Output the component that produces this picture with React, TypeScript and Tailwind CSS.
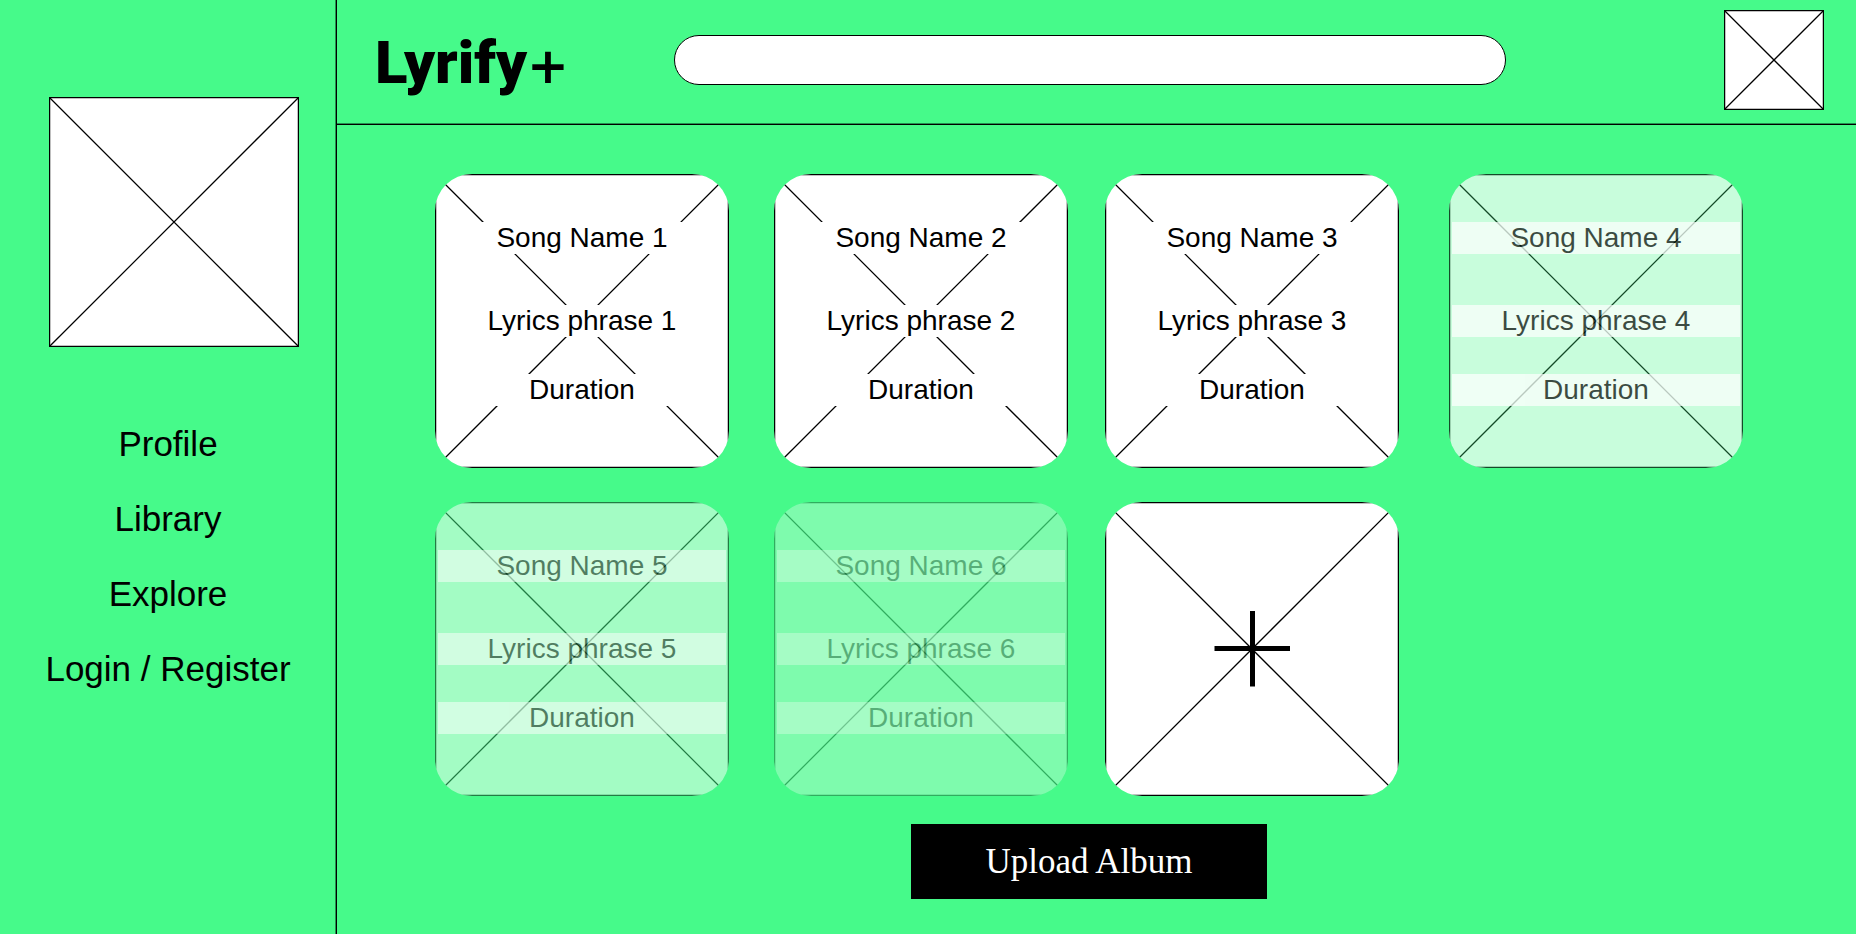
import React from 'react';

function CrossLines() {
  return (
    <svg className="absolute inset-0 h-full w-full" viewBox="0 0 100 100" preserveAspectRatio="none" aria-hidden="true">
      <path d="M0 0L100 100M100 0L0 100" fill="none" stroke="#000" strokeWidth="1.25" vectorEffect="non-scaling-stroke" />
    </svg>
  );
}

function Placeholder({ className }: { className: string }) {
  return (
    <div className={`relative border border-black bg-white shadow-[inset_0_0_0_1px_#bfbfbf] ${className}`}>
      <CrossLines />
    </div>
  );
}

type Song = { id: number; opacity: string };

const songs: Song[] = [
  { id: 1, opacity: 'opacity-100' },
  { id: 2, opacity: 'opacity-100' },
  { id: 3, opacity: 'opacity-100' },
  { id: 4, opacity: 'opacity-70' },
  { id: 5, opacity: 'opacity-50' },
  { id: 6, opacity: 'opacity-30' },
];

function SongCard({ song }: { song: Song }) {
  const strip = `bg-white text-center text-[28px] leading-8 ${song.opacity}`;
  return (
    <article className="relative h-[294px] w-[294px]">
      <div className={`absolute inset-0 overflow-hidden rounded-[37px] ${song.opacity}`}>
        <Placeholder className="h-full w-full" />
      </div>
      <div className="relative flex flex-col px-[3px] pt-12">
        <h2 className={strip}>Song Name {song.id}</h2>
        <p className={`mt-[51px] ${strip}`}>Lyrics phrase {song.id}</p>
        <p className={`mt-[37px] ${strip}`}>Duration</p>
      </div>
    </article>
  );
}

function AddCard() {
  return (
    <button
      type="button"
      aria-label="Add song"
      className="relative flex h-[294px] w-[294px] items-center justify-center overflow-hidden rounded-[37px]"
    >
      <div className="absolute inset-0">
        <Placeholder className="h-full w-full" />
      </div>
      <svg className="relative h-[76px] w-[76px]" viewBox="0 0 76 76" aria-hidden="true">
        <path d="M38.5 0V75.5M0.5 37.5H76" fill="none" stroke="#000" strokeWidth="5" />
      </svg>
    </button>
  );
}

const links = ['Profile', 'Library', 'Explore', 'Login / Register'];

export default function App() {
  return (
    <div className="min-h-screen bg-white pr-0.5 font-['Liberation_Sans',Arial,sans-serif] text-black">
      <div className="flex min-h-screen bg-[#46fa8a]">
        <aside className="w-[337px] shrink-0 border-r border-black pt-[97px] shadow-[inset_-1px_0_0_#249050]">
          <Placeholder className="ml-[49px] h-[250px] w-[250px]" />
          <nav className="mt-[59px] flex flex-col text-center text-[35px] leading-[75px]">
            {links.map((label) => (
              <a key={label} href="#">
                {label}
              </a>
            ))}
          </nav>
        </aside>
        <div className="flex min-w-0 flex-1 flex-col">
          <header className="flex h-[125px] items-start border-b border-black pr-8 pl-[38px] shadow-[inset_0_-1px_0_#249050]">
            <h1 className="mt-[31px] w-[299px] shrink-0 font-[Roboto,sans-serif] text-[60px] leading-[64px] font-black">
              Lyrify<span className="font-['DejaVu_Sans',sans-serif] text-[50px] leading-none font-bold">+</span>
            </h1>
            <input
              type="search"
              aria-label="Search"
              className="mt-[35px] h-[50px] min-w-0 flex-1 rounded-full border border-black bg-white px-6 text-2xl outline-none"
            />
            <Placeholder className="mt-2.5 ml-[218px] h-[100px] w-[100px] shrink-0" />
          </header>
          <main className="flex flex-col items-center pt-[49px] pr-[113px] pb-8 pl-[98px]">
            <div className="grid w-full grid-cols-[339fr_331fr_344fr_294px] gap-y-[34px]">
              {songs.map((song) => (
                <SongCard key={song.id} song={song} />
              ))}
              <AddCard />
            </div>
            <button
              type="button"
              className="mt-7 h-[75px] w-[356px] bg-black font-['Liberation_Serif',serif] text-[35px] leading-10 text-white"
            >
              Upload Album
            </button>
          </main>
        </div>
      </div>
    </div>
  );
}
